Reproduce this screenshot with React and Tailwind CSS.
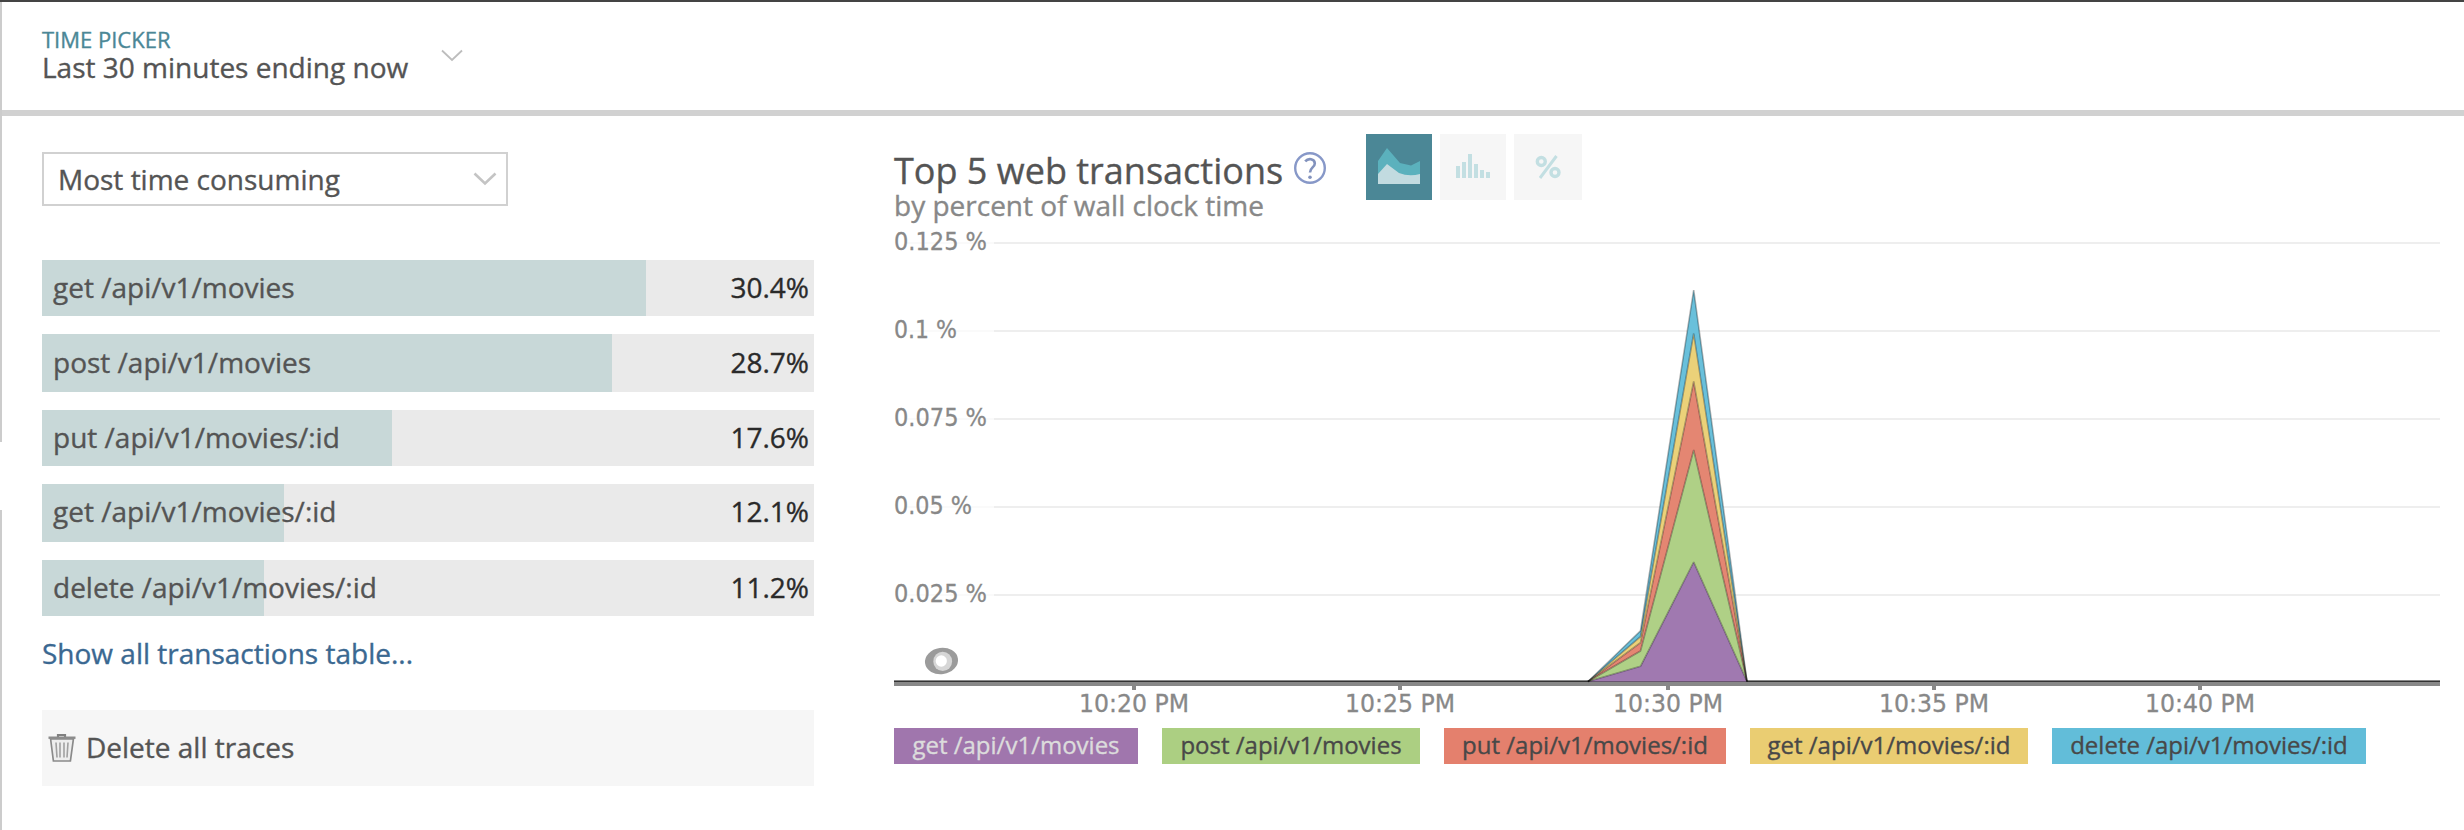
const FILLS = [
  { name: "get /api/v1/movies", pct: "30.4%", fill: 604, row: "h-14 mb-[18px]", text: "pt-2" },
  { name: "post /api/v1/movies", pct: "28.7%", fill: 570, row: "h-[58px] mb-[18px]", text: "pt-[9px]" },
  { name: "put /api/v1/movies/:id", pct: "17.6%", fill: 350, row: "h-14 mb-[18px]", text: "pt-2" },
  { name: "get /api/v1/movies/:id", pct: "12.1%", fill: 242, row: "h-[58px] mb-[18px]", text: "pt-2" },
  { name: "delete /api/v1/movies/:id", pct: "11.2%", fill: 222, row: "h-14", text: "pt-2" },
];

const LEGEND = [
  { name: "get /api/v1/movies", cls: "w-[244px] bg-[#a076ad] text-[#dcdcdc]" },
  { name: "post /api/v1/movies", cls: "w-[258px] bg-[#accf82] text-[#484848]" },
  { name: "put /api/v1/movies/:id", cls: "w-[282px] bg-[#e4806d] text-[#484848]" },
  { name: "get /api/v1/movies/:id", cls: "w-[278px] bg-[#eacd72] text-[#484848]" },
  { name: "delete /api/v1/movies/:id", cls: "w-[314px] bg-[#62bdd9] text-[#484848]" },
];

const GRID = [
  { y: 13, label: "0.125 %", w: 93 },
  { y: 101, label: "0.1 %", w: 63 },
  { y: 189, label: "0.075 %", w: 93 },
  { y: 277, label: "0.05 %", w: 78 },
  { y: 365, label: "0.025 %", w: 93 },
];

const TICKS = [
  { x: 240, label: "10:20 PM" },
  { x: 506, label: "10:25 PM" },
  { x: 774, label: "10:30 PM" },
  { x: 1040, label: "10:35 PM" },
  { x: 1306, label: "10:40 PM" },
];

// Stacked areas, bottom to top: y at the second sample and y at the peak.
const AREAS = [
  { color: "#a079b0", mid: 436.3, peak: 332 },
  { color: "#afd086", mid: 421, peak: 220 },
  { color: "#e48672", mid: 412.7, peak: 151.5 },
  { color: "#ebd179", mid: 406.7, peak: 103.5 },
  { color: "#69c0db", mid: 400.7, peak: 60 },
];
const BASE = 451.5;

function Chart() {
  return (
    <svg className="block overflow-visible" width="1548" height="490" viewBox="0 0 1548 490">
      {GRID.map((g) => (
        <g key={g.label}>
          <rect x="12" y={g.y - 1} width="88" height="2" fill="#fafafa" />
          <rect x="100" y={g.y - 1} width="1446" height="2" fill="#eeeeee" />
          <text x="0" y={g.y + 7} textLength={g.w} fontSize="24" fill="#888" stroke="#888" className="font-['DejaVu_Sans',sans-serif]" lengthAdjust="spacingAndGlyphs" strokeWidth="0.3">
            {g.label}
          </text>
        </g>
      ))}
      <rect x="0" y="450" width="1546" height="6" fill="#888" />
      {TICKS.map((t) => (
        <g key={t.x}>
          <rect x={t.x - 2} y="456" width="4" height="4" fill="#888" />
          <text x={t.x - 55} y="482" textLength="110" fontSize="24" fill="#888" stroke="#888" className="font-['DejaVu_Sans',sans-serif]" lengthAdjust="spacingAndGlyphs" strokeWidth="0.3">
            {t.label}
          </text>
        </g>
      ))}
      <rect x="0" y="451" width="1546" height="1" fill="#333" />
      {AREAS.map((a, i) => {
        const lo = AREAS[i - 1] || { mid: BASE, peak: BASE };
        return (
          <path key={a.color} d={`M694 ${BASE} L746.5 ${a.mid} L799.7 ${a.peak} L853 ${BASE} L799.7 ${lo.peak} L746.5 ${lo.mid} Z`} fill={a.color} />
        );
      })}
      {AREAS.map((a) => (
        <path key={a.color} d={`M694 ${BASE} L746.5 ${a.mid} L799.7 ${a.peak} L853 ${BASE}`} fill="none" stroke="#000" strokeOpacity="0.3" strokeWidth="1.6" strokeLinejoin="bevel" />
      ))}
      <g>
        <ellipse cx="47.5" cy="431" rx="16.6" ry="13.2" fill="#9b9b9b" transform="rotate(-8 47.5 431)" />
        <ellipse cx="48.7" cy="431.4" rx="9.4" ry="9.6" fill="#d6d6d6" />
        <ellipse cx="47.3" cy="431" rx="5.6" ry="5.8" fill="#fff" />
      </g>
    </svg>
  );
}

function Trash() {
  return (
    <svg width="28" height="29" viewBox="0 0 28 29" fill="none" className="block">
      <path d="M10 3V1h7v2" stroke="#808080" strokeWidth="2.2" />
      <path d="M0.5 3.7h27" stroke="#8c8c8c" strokeWidth="2.4" />
      <path d="M2.6 5L5.4 27H22.4L25.4 5Z" fill="#ededed" stroke="#8a8a8a" strokeWidth="1.7" />
      <path d="M8 8.5L9 23.5M12 8.5V23.5M16 8.5V23.5M20 8.5L19 23.5" stroke="#a0a0a0" strokeWidth="1.6" />
    </svg>
  );
}

export default function App() {
  return (
    <div className="flex h-[830px] w-[2464px] overflow-hidden bg-white font-['Open_Sans','Noto_Sans',sans-serif] text-[28px] leading-[38px] text-[#545454] [-webkit-text-stroke:0.35px]">
      <div className="flex w-0.5 shrink-0 flex-col">
        <div className="h-0.5 bg-[#444]" />
        <div className="h-[440px] bg-[#ccc]" />
        <div className="h-[68px]" />
        <div className="flex-1 bg-[#ccc]" />
      </div>
      <div className="flex flex-1 flex-col">
        <header className="flex h-[116px] shrink-0 items-start gap-[33px] border-t-2 border-b-[6px] border-t-[#444] border-b-[#d1d1d1] pl-10">
          <div className="w-[366px] whitespace-nowrap pt-6">
            <div className="text-[22px] leading-[26px] text-[#4b8796]">TIME PICKER</div>
            <div className="-mt-0.5 leading-[34px]">Last 30 minutes ending now</div>
          </div>
          <svg className="mt-[47px] block" width="22" height="13" viewBox="0 0 22 13" fill="none">
            <path d="M1 1.5L11 11L21 1.5" stroke="#bdbdbd" strokeWidth="1.8" />
          </svg>
        </header>
        <div className="flex flex-1">
          <section className="w-[812px] shrink-0 pl-10 pt-9">
            <button className="flex h-[54px] w-[466px] items-center justify-between border-2 border-[#d1d1d1] pl-[14px] pr-[9px]">
              <span>Most time consuming</span>
              <svg className="block" width="24" height="14" viewBox="0 0 24 14" fill="none">
                <path d="M1.5 1.5L12 11.5L22.5 1.5" stroke="#c4c4c4" strokeWidth="2.6" />
              </svg>
            </button>
            <div className="mt-[54px] flex flex-col">
              {FILLS.map((r) => (
                <div key={r.name} className={`grid w-[772px] bg-[#eaeaea] ${r.row}`}>
                  <div className="col-start-1 row-start-1 bg-[#c8d8d8]" style={{ width: r.fill }} />
                  <div className={`col-start-1 row-start-1 flex items-start justify-between pl-[11px] pr-[5px] ${r.text}`}>
                    <span>{r.name}</span>
                    <span className="text-[#2a2a2a]">{r.pct}</span>
                  </div>
                </div>
              ))}
            </div>
            <a className="mt-[18px] block text-[#3a6891]">Show all transactions table...</a>
            <div className="mt-[38px] flex h-[76px] w-[772px] items-center gap-[10px] bg-[#f6f6f6] pl-[6px]">
              <Trash />
              <span className="pb-0.5">Delete all traces</span>
            </div>
          </section>
          <section className="flex-1 pl-20">
            <div className="flex h-[114px]">
              <div className="w-[388px] whitespace-nowrap pt-9">
                <h1 className="text-[36px] leading-[38px]">Top 5 web transactions</h1>
                <p className="-mt-[3px] leading-[36px] text-[#888]">by percent of wall clock time</p>
              </div>
              <svg className="ml-3 mt-9 block" width="32" height="32" viewBox="0 0 32 32" fill="none">
                <circle cx="16" cy="16" r="14.8" stroke="#8798c8" strokeWidth="2.4" />
                <path d="M11.2 9.4c1.7-2 4-2.5 5.8-2.2 2.3.4 3.8 2 3.8 4.2 0 4-4.8 4-4.8 9" stroke="#8292bd" strokeWidth="2.6" />
                <circle cx="16" cy="25.2" r="1.8" fill="#8292bd" />
              </svg>
              <div className="ml-10 mt-[18px] flex gap-2">
                <div className="h-[66px] w-[66px] bg-[#4b8796]">
                  <svg width="66" height="66" viewBox="0 0 66 66">
                    <path d="M12 27L21 14L34 29L45 31.5L54 27V50H12Z" fill="#5bb1bd" />
                    <path d="M12 40L21 30L33 39Q43 43 54 40V50H12Z" fill="#c2dbe0" />
                  </svg>
                </div>
                <div className="h-[66px] w-[66px] bg-[#f6f6f6]">
                  <svg width="66" height="66" viewBox="0 0 66 66" fill="#c3dfe2">
                    <path d="M16 32h4v12h-4zM22 28h4v16h-4zM28 20h4v24h-4zM34 30h4v14h-4zM40 36h4v8h-4zM46 38h4v6h-4z" />
                  </svg>
                </div>
                <div className="h-[66px] w-[68px] bg-[#f6f6f6]">
                  <svg width="68" height="66" viewBox="0 0 68 66" fill="none" stroke="#c3dfe2">
                    <circle cx="27.3" cy="27.5" r="4" strokeWidth="3.4" />
                    <circle cx="41" cy="38.5" r="4" strokeWidth="3.4" />
                    <path d="M26 44L42.5 22" strokeWidth="3" />
                  </svg>
                </div>
              </div>
            </div>
            <Chart />
            <div className="mt-[8px] flex gap-6">
              {LEGEND.map((l) => (
                <div key={l.name} className={`flex h-9 items-center justify-center whitespace-nowrap pb-0.5 text-2xl ${l.cls}`}>
                  {l.name}
                </div>
              ))}
            </div>
          </section>
        </div>
      </div>
    </div>
  );
}
